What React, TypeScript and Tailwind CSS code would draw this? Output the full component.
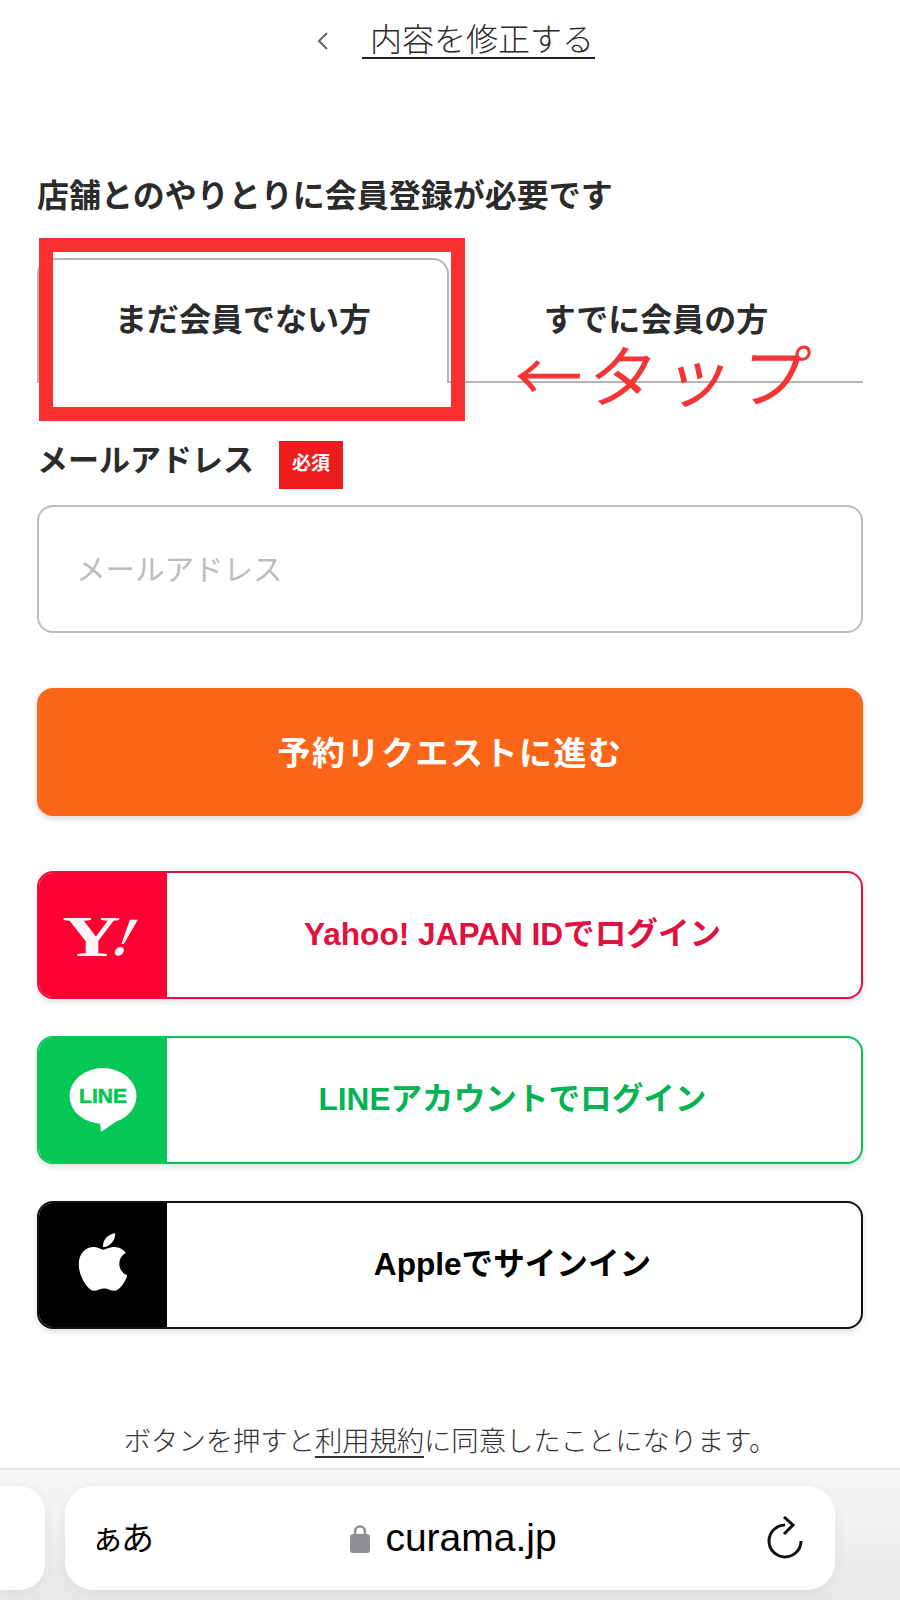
import React from "react";
import { FaApple } from "react-icons/fa";

const jp = "font-['Noto_Sans_CJK_JP',sans-serif]";
const latin = "font-['Liberation_Sans','Noto_Sans_CJK_JP',sans-serif]";

function YahooLogo() {
  return (
    <span className="flex items-end font-['Liberation_Serif',serif] font-bold text-[#fff5f5] leading-none pt-[3px]">
      <span className="text-[57px] leading-[38px] scale-x-[1.42]">Y</span>
      <span className="text-[54px] leading-[38px] italic -skew-x-[16deg] ml-[2px] -mr-[1px]">!</span>
    </span>
  );
}

function LineLogo() {
  return (
    <svg width="68" height="66" viewBox="0 0 68 66" className="mt-[2px]">
      <ellipse cx="34" cy="28" rx="33.5" ry="28" fill="#fff" />
      <path d="M22 50 L31 54 L32 64 L52 50 Z" fill="#fff" />
      <text
        x="34"
        y="35"
        textAnchor="middle"
        fontSize="21"
        fontWeight="700"
        fontFamily="Liberation Sans, sans-serif"
        fill="#06c755"
        stroke="#06c755"
        strokeWidth="0.6"
      >
        LINE
      </text>
    </svg>
  );
}

function SocialButton({
  icon,
  label,
  frame,
  side,
  text,
}: {
  icon: React.ReactNode;
  label: string;
  frame: string;
  side: string;
  text: string;
}) {
  return (
    <div className={`flex h-[128px] rounded-[16px] border-2 bg-white overflow-hidden shadow-[0_3px_6px_rgba(0,0,0,0.12)] ${frame}`}>
      <div className={`w-[128px] shrink-0 flex items-center justify-center ${side}`}>{icon}</div>
      <div className={`flex-1 flex items-center justify-center pr-[3px] text-[31.6px] font-bold ${latin} ${text}`}>{label}</div>
    </div>
  );
}

export default function App() {
  return (
    <div className={`relative w-[900px] h-[1600px] bg-white overflow-hidden flex flex-col text-[#2b2b2b] ${jp}`}>
      {/* back link */}
      <div className="h-[78px] flex items-center justify-center pl-[15px]">
        <svg width="14" height="20" viewBox="0 0 14 20" className="mr-[28px] mt-1 -translate-x-[4px]" fill="none" stroke="#666" strokeWidth="2">
          <path d="M11 2 L3 10 L11 18" />
        </svg>
        <span className="h-[40px] pl-[8px] pr-[1px] text-[32px] leading-[36px] font-light border-b-2 border-[#222]">内容を修正する</span>
      </div>

      <div className="px-[37px] flex flex-col">
        <h1 className="mt-[95px] text-[32px] leading-[40px] font-bold">店舗とのやりとりに会員登録が必要です</h1>

        {/* tabs */}
        <div className="mt-[45px] flex h-[125px]">
          <div className="w-[412px] rounded-t-[16px] border-2 border-b-0 border-[#b5b5b5] flex items-center justify-center text-[32px] font-bold pb-[9px]">
            まだ会員でない方
          </div>
          <div className="flex-1 border-b-2 border-[#b5b5b5] flex items-center justify-center pb-[6px] text-[32px] font-bold">
            すでに会員の方
          </div>
        </div>

        <div className="mt-[58px] flex items-center h-[48px]">
          <span className="text-[31px] font-bold leading-[40px] mb-[14px]">メールアドレス</span>
          <span className="ml-[25px] w-[64px] h-[48px] bg-[#ee1c1c] text-white text-[19px] font-bold flex items-center justify-center pb-[6px]">必須</span>
        </div>

        <div className="mt-[16px] h-[128px] rounded-[16px] border-2 border-[#bdbdbd] flex items-center pb-[3px] pl-[37px] text-[29.5px] text-[#bcbcbc]">
          メールアドレス
        </div>

        <div className="mt-[55px] h-[128px] rounded-[16px] bg-[#fb6518] shadow-[0_3px_6px_rgba(0,0,0,0.15)] flex items-center justify-center text-white text-[33px] font-bold tracking-[1.5px]">
          予約リクエストに進む
        </div>

        <div className="mt-[55px] flex flex-col gap-[37px]">
          <SocialButton
            icon={<YahooLogo />}
            label="Yahoo! JAPAN IDでログイン"
            frame="border-[#e5103f]"
            side="bg-[#ff0033]"
            text="text-[#e0103f]"
          />
          <SocialButton
            icon={<LineLogo />}
            label="LINEアカウントでログイン"
            frame="border-[#06c755]"
            side="bg-[#06c755]"
            text="text-[#06b352]"
          />
          <SocialButton
            icon={<FaApple className="text-white -translate-y-[3px]" size={66} />}
            label="Appleでサインイン"
            frame="border-[#111]"
            side="bg-black"
            text="text-black"
          />
        </div>

        <p className="mt-[90px] text-center text-[27.3px] leading-[40px] font-light text-[#333]">
          ボタンを押すと<span className="underline underline-offset-[5px]">利用規約</span>に同意したことになります。
        </p>
      </div>

      {/* browser bar */}
      <div className="mt-auto h-[132px] bg-linear-to-b from-[#f8f8f8] to-[#e7e7e8] border-t-2 border-[#e4e4e4] relative flex items-start pt-[16px] gap-[20px]">
        <div className="w-[45px] h-[104px] bg-white rounded-r-[26px] shadow-[0_2px_14px_rgba(0,0,0,0.06)]" />
        <div className="w-[770px] h-[104px] bg-white rounded-[28px] shadow-[0_2px_14px_rgba(0,0,0,0.06)] flex items-center justify-between pl-[26px] pr-[30px] text-black">
          <span className="flex items-baseline text-[33px] leading-none pb-[4px]">
            <span className="tracking-[-3px]">ぁ</span>あ
          </span>
          <span className="flex items-center gap-[15px] text-[39px] font-['Liberation_Sans',sans-serif] mr-[10px]">
            <svg width="20" height="29" viewBox="0 0 20 29">
              <path d="M5 11 V7.5 a5 5 0 0 1 10 0 V11" fill="none" stroke="#8e8e93" strokeWidth="2.5" />
              <rect x="0" y="10" width="20" height="19" rx="3" fill="#8e8e93" />
            </svg>
            curama.jp
          </span>
          <svg width="42" height="44" viewBox="0 0 42 44" fill="none" stroke="#111" strokeWidth="3">
            <path d="M22 9 A16 16 0 1 0 38 25" />
            <path d="M21 1 L30 9 L21 18" />
          </svg>
        </div>
      </div>

      {/* red annotations laid over the screenshot */}
      <div className="absolute left-[39px] top-[238px] w-[426px] h-[183px] border-[14px] border-[#fb3030]" />
      <div className="absolute left-[515px] top-[333px] text-[#f43535] text-[68px] leading-[80px] font-normal whitespace-nowrap flex items-center -skew-x-[8deg]">
        <span className="tracking-[-2px]">←</span>
        <span className="ml-[8px]">タ</span>
        <span className="ml-[8px]">ッ</span>
        <span className="ml-[8px]">プ</span>
      </div>
    </div>
  );
}
